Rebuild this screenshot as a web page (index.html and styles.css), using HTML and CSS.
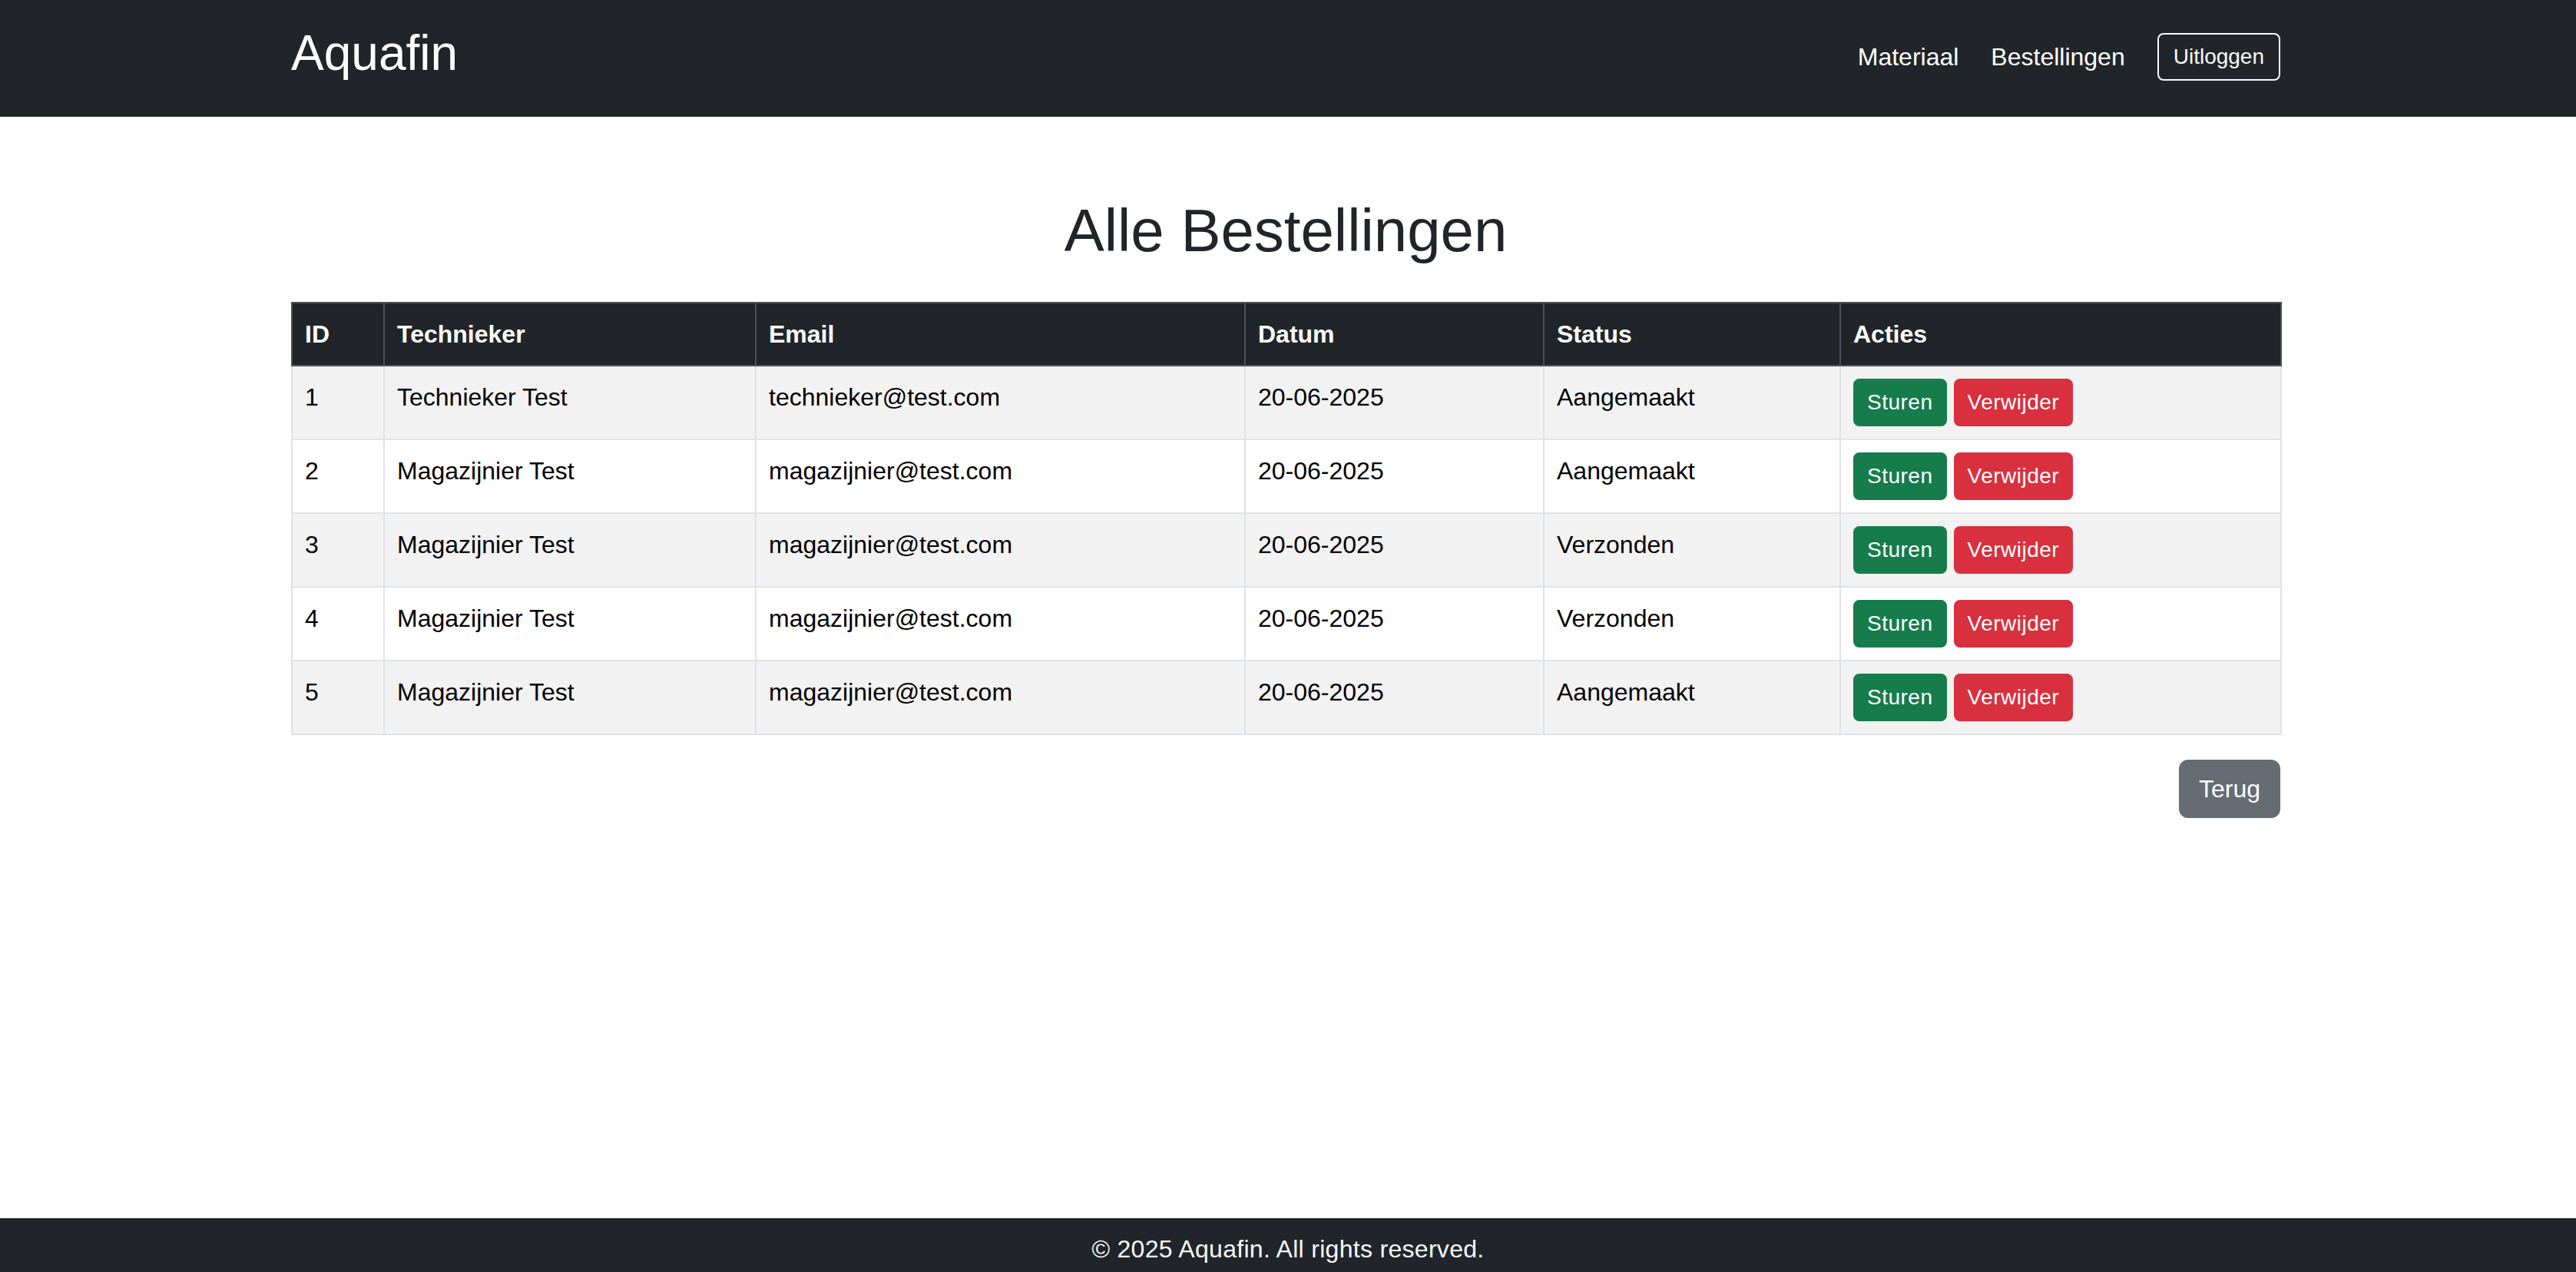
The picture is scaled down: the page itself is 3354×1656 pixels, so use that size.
FILE: index.html
```html
<!DOCTYPE html>
<html lang="nl">
<head>
<meta charset="utf-8">
<title>Alle Bestellingen - Aquafin</title>
<link rel="stylesheet" href="styles.css">
</head>
<body>
<div class="page">
  <header class="navbar">
    <div class="container navbar-inner">
      <a class="brand" href="#">Aquafin</a>
      <nav class="nav">
        <a class="nav-link" href="#">Materiaal</a>
        <a class="nav-link" href="#">Bestellingen</a>
        <button class="btn-logout" type="button">Uitloggen</button>
      </nav>
    </div>
  </header>

  <main class="main container">
    <h1 class="title">Alle Bestellingen</h1>
    <table class="orders">
      <colgroup>
        <col class="c-id">
        <col class="c-tech">
        <col class="c-email">
        <col class="c-date">
        <col class="c-status">
        <col class="c-actions">
      </colgroup>
      <thead>
        <tr>
          <th>ID</th>
          <th>Technieker</th>
          <th>Email</th>
          <th>Datum</th>
          <th>Status</th>
          <th>Acties</th>
        </tr>
      </thead>
      <tbody>
        <tr>
          <td>1</td>
          <td>Technieker Test</td>
          <td>technieker@test.com</td>
          <td>20-06-2025</td>
          <td>Aangemaakt</td>
          <td><div class="actions"><button class="btn-sm btn-success" type="button">Sturen</button><button class="btn-sm btn-danger" type="button">Verwijder</button></div></td>
        </tr>
        <tr>
          <td>2</td>
          <td>Magazijnier Test</td>
          <td>magazijnier@test.com</td>
          <td>20-06-2025</td>
          <td>Aangemaakt</td>
          <td><div class="actions"><button class="btn-sm btn-success" type="button">Sturen</button><button class="btn-sm btn-danger" type="button">Verwijder</button></div></td>
        </tr>
        <tr>
          <td>3</td>
          <td>Magazijnier Test</td>
          <td>magazijnier@test.com</td>
          <td>20-06-2025</td>
          <td>Verzonden</td>
          <td><div class="actions"><button class="btn-sm btn-success" type="button">Sturen</button><button class="btn-sm btn-danger" type="button">Verwijder</button></div></td>
        </tr>
        <tr>
          <td>4</td>
          <td>Magazijnier Test</td>
          <td>magazijnier@test.com</td>
          <td>20-06-2025</td>
          <td>Verzonden</td>
          <td><div class="actions"><button class="btn-sm btn-success" type="button">Sturen</button><button class="btn-sm btn-danger" type="button">Verwijder</button></div></td>
        </tr>
        <tr>
          <td>5</td>
          <td>Magazijnier Test</td>
          <td>magazijnier@test.com</td>
          <td>20-06-2025</td>
          <td>Aangemaakt</td>
          <td><div class="actions"><button class="btn-sm btn-success" type="button">Sturen</button><button class="btn-sm btn-danger" type="button">Verwijder</button></div></td>
        </tr>
      </tbody>
    </table>
    <div class="back-row">
      <a class="btn-back" href="#">Terug</a>
    </div>
  </main>

  <footer class="footer">
    <p class="footer-text">© 2025 Aquafin. All rights reserved.</p>
  </footer>
</div>
</body>
</html>
```

FILE: styles.css
```css
* {
  box-sizing: border-box;
}

html, body {
  margin: 0;
  padding: 0;
}

body {
  font-family: "Liberation Sans", Arial, sans-serif;
  font-size: 32px;
  line-height: 1.5;
  color: #212529;
  background: #ffffff;
}

.page {
  min-height: 100vh;
  display: flex;
  flex-direction: column;
}

.container {
  width: 100%;
  max-width: 2638px;
  margin-left: calc(50% - 1322px);
  margin-right: auto;
  padding: 0 24px;
}

/* Navbar */
.navbar {
  background: #212529;
}

.navbar-inner {
  height: 152px;
  display: flex;
  align-items: center;
  justify-content: space-between;
}

.brand {
  color: #ffffff;
  text-decoration: none;
  font-size: 64px;
  line-height: 76px;
  padding-bottom: 14px;
}

.nav {
  display: flex;
  align-items: center;
  gap: 42px;
  padding-bottom: 4px;
}

.nav-link {
  color: #ffffff;
  text-decoration: none;
  font-size: 32px;
  line-height: 48px;
}

.btn-logout {
  font-family: inherit;
  font-size: 28px;
  line-height: 42px;
  padding: 8px 19px;
  color: #f8f9fa;
  background: transparent;
  border: 2px solid #f8f9fa;
  border-radius: 8px;
  cursor: pointer;
}

/* Main */
.main {
  flex: 1;
}

.title {
  margin: 100px 0 45px;
  text-align: center;
  font-size: 78px;
  line-height: 96px;
  font-weight: 500;
  color: #212529;
}

.orders {
  width: 2590px;
  table-layout: fixed;
  border-collapse: collapse;
  color: #000000;
}

.c-id { width: 120px; }
.c-tech { width: 484px; }
.c-email { width: 637px; }
.c-date { width: 389px; }
.c-status { width: 386px; }
.c-actions { width: 574px; }

.orders th,
.orders td {
  text-align: left;
  vertical-align: top;
  padding: 16px;
  line-height: 48px;
}

.orders th {
  background: #212529;
  color: #ffffff;
  font-weight: 700;
  border: 2px solid #4d5154;
}

.orders td {
  border: 2px solid #dee2e6;
}

.orders tbody tr:nth-child(odd) td {
  background: #f2f2f2;
}

.orders tbody tr:nth-child(even) td {
  background: #ffffff;
}

.actions {
  display: flex;
  gap: 9px;
}

.btn-sm {
  font-family: inherit;
  font-size: 28px;
  line-height: 42px;
  letter-spacing: 0.5px;
  padding: 8px 16px;
  border: 2px solid transparent;
  border-radius: 8px;
  color: #ffffff;
  cursor: pointer;
}

.btn-success {
  background: #177c4c;
  border-color: #177c4c;
}

.btn-danger {
  background: #d8303f;
  border-color: #d8303f;
}

.back-row {
  display: flex;
  justify-content: flex-end;
  margin-top: 32px;
}

.btn-back {
  display: inline-block;
  font-size: 32px;
  line-height: 48px;
  padding: 12px 24px;
  border: 2px solid #656c73;
  border-radius: 12px;
  background: #656c73;
  color: #ffffff;
  text-decoration: none;
}

/* Footer */
.footer {
  background: #212529;
  height: 70px;
  padding-top: 16px;
  text-align: center;
}

.footer-text {
  margin: 0;
  color: #f8f9fa;
  font-size: 32px;
  line-height: 48px;
  letter-spacing: 0.3px;
}
```
